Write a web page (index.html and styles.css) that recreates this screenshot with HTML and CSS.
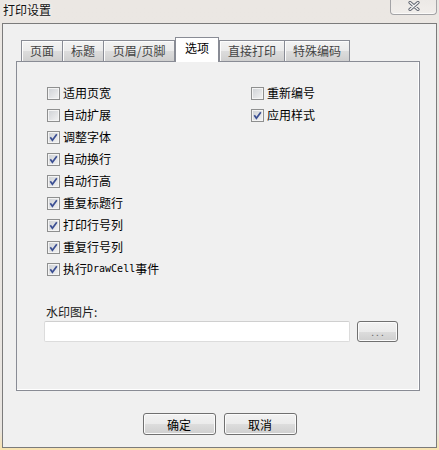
FILE: index.html
```html
<!DOCTYPE html>
<html lang="zh-CN">
<head>
  <meta charset="UTF-8">
  <title>打印设置</title>
  <link rel="stylesheet" href="styles.css">
</head>
<body>

  <div class="window">
    <!-- Title bar -->
    <div class="titlebar">
      <span class="title">打印设置</span>
      <button class="close">
        <svg width="12" height="10" viewBox="0 0 12 10">
          <path d="M2 1.5 L10 8.5 M10 1.5 L2 8.5" stroke="#5f6470" stroke-width="3.2" stroke-linecap="round"/>
          <path d="M2 1.5 L10 8.5 M10 1.5 L2 8.5" stroke="#f4f4f4" stroke-width="1.4" stroke-linecap="round"/>
        </svg>
      </button>
    </div>

    <div class="client">
      <!-- Tabs -->
      <div class="tabs">
        <div class="tab">页面</div>
        <div class="tab">标题</div>
        <div class="tab tab-wide">页眉/页脚</div>
        <div class="tab active">选项</div>
        <div class="tab">直接打印</div>
        <div class="tab">特殊编码</div>
      </div>

      <div class="panel">
        <div class="options">
          <div class="col">
            <label class="check"><span class="box"></span>适用页宽</label>
            <label class="check"><span class="box"></span>自动扩展</label>
            <label class="check"><span class="box"><svg width="11" height="11" viewBox="0 0 11 11"><path d="M2.3 5.2 L4.4 8.2 L8.8 2.2" stroke="#3b4f93" stroke-width="1.7" fill="none"/></svg></span>调整字体</label>
            <label class="check"><span class="box"><svg width="11" height="11" viewBox="0 0 11 11"><path d="M2.3 5.2 L4.4 8.2 L8.8 2.2" stroke="#3b4f93" stroke-width="1.7" fill="none"/></svg></span>自动换行</label>
            <label class="check"><span class="box"><svg width="11" height="11" viewBox="0 0 11 11"><path d="M2.3 5.2 L4.4 8.2 L8.8 2.2" stroke="#3b4f93" stroke-width="1.7" fill="none"/></svg></span>自动行高</label>
            <label class="check"><span class="box"><svg width="11" height="11" viewBox="0 0 11 11"><path d="M2.3 5.2 L4.4 8.2 L8.8 2.2" stroke="#3b4f93" stroke-width="1.7" fill="none"/></svg></span>重复标题行</label>
            <label class="check"><span class="box"><svg width="11" height="11" viewBox="0 0 11 11"><path d="M2.3 5.2 L4.4 8.2 L8.8 2.2" stroke="#3b4f93" stroke-width="1.7" fill="none"/></svg></span>打印行号列</label>
            <label class="check"><span class="box"><svg width="11" height="11" viewBox="0 0 11 11"><path d="M2.3 5.2 L4.4 8.2 L8.8 2.2" stroke="#3b4f93" stroke-width="1.7" fill="none"/></svg></span>重复行号列</label>
            <label class="check"><span class="box"><svg width="11" height="11" viewBox="0 0 11 11"><path d="M2.3 5.2 L4.4 8.2 L8.8 2.2" stroke="#3b4f93" stroke-width="1.7" fill="none"/></svg></span>执行<span class="latin">DrawCell</span>事件</label>
          </div>
          <div class="col">
            <label class="check"><span class="box"></span>重新编号</label>
            <label class="check"><span class="box"><svg width="11" height="11" viewBox="0 0 11 11"><path d="M2.3 5.2 L4.4 8.2 L8.8 2.2" stroke="#3b4f93" stroke-width="1.7" fill="none"/></svg></span>应用样式</label>
          </div>
        </div>

        <!-- Watermark -->
        <div class="watermark">
          <div class="wm-label">水印图片:</div>
          <div class="wm-row">
            <div class="wm-input"></div>
            <button class="btn browse">...</button>
          </div>
        </div>
      </div>

      <!-- Dialog buttons -->
      <div class="actions">
        <button class="btn">确定</button>
        <button class="btn">取消</button>
      </div>
    </div>
  </div>

</body>
</html>
```

FILE: styles.css
```css
/* Basic Reset */
* {
  margin: 0;
  padding: 0;
  box-sizing: border-box;
}

body {
  width: 439px;
  height: 450px;
  overflow: hidden;
  font-family: "Noto Sans CJK SC", sans-serif;
  font-size: 12px;
  line-height: 16px;
  color: #000;
  background: linear-gradient(to bottom, #ebe7e3 0, #e9e5e1 430px, #f6e2b4 447px, #f8e4b0 450px);
}

.window {
  margin: 0 2px;
}

/* Title bar */
.titlebar {
  height: 23px;
  display: flex;
  align-items: flex-start;
  padding-left: 1px;
}

.title {
  padding-top: 2px;
  color: #111;
  text-shadow: 0 0 4px #fff;
}

.close {
  margin-left: auto;
  width: 47px;
  height: 15px;
  border: 1px solid #a3a3a6;
  border-top: none;
  border-radius: 0 0 4px 4px;
  background: linear-gradient(#ece9e6, #f1eeeb);
  box-shadow: inset 0 -1px 0 #fbfaf9;
  display: flex;
  align-items: center;
  justify-content: center;
  padding-bottom: 3px;
}

/* Client area */
.client {
  background-color: #f0f0f0;
  border: 1px solid #7b7b7b;
  padding: 13px 0 12px 13px;
}

/* Tabs */
.tabs {
  display: flex;
  align-items: flex-end;
  height: 24px;
  margin-left: 5px;
}

.tab {
  height: 21px;
  padding: 0 8px;
  border: 1px solid #898c95;
  border-bottom: none;
  border-left: none;
  color: #444;
  line-height: 20px;
  text-align: center;
  background: linear-gradient(#f3f3f3 0%, #ebebeb 50%, #dddddd 50%, #cfcfcf 100%);
  box-shadow: inset 1px 1px 0 #fcfcfc;
}

.tab:first-child {
  border-left: 1px solid #898c95;
}

.tab-wide {
  min-width: 71px;
}

.tab.active + .tab {
  border-left: 1px solid #898c95;
}

.tab.active {
  position: relative;
  z-index: 1;
  height: 25px;
  margin-bottom: -1px;
  padding: 0 9px;
  border-left: 1px solid #898c95;
  color: #000;
  line-height: 20px;
  background: #fff;
  box-shadow: none;
}

.panel {
  width: 404px;
  height: 330px;
  border: 1px solid #898c95;
  box-shadow: inset -1px -1px 0 #fff;
}

/* Options */
.options {
  display: grid;
  grid-template-columns: 204px auto;
  padding: 20px 0 0 30px;
}

.col {
  display: flex;
  flex-direction: column;
}

.check {
  height: 22px;
  display: flex;
  align-items: center;
  white-space: nowrap;
}

.box {
  width: 13px;
  height: 13px;
  margin-right: 3px;
  border: 1px solid #8e8f8f;
  background: linear-gradient(135deg, #cdd0d4, #f3f3f3);
  box-shadow: inset 0 0 0 1px #f4f4f4;
  display: flex;
}

.latin {
  font-family: "DejaVu Sans Mono", monospace;
  font-size: 10px;
}

/* Watermark */
.watermark {
  margin-top: 24px;
  padding-left: 27px;
}

.wm-label {
  padding-left: 2px;
  color: #222;
}

.wm-row {
  display: flex;
  margin-top: 1px;
}

.wm-input {
  width: 306px;
  height: 21px;
  background: #fff;
  border: 1px solid #dcdcdc;
  border-top-color: #cfcfcf;
  border-radius: 2px;
}

/* Buttons */
.btn {
  width: 73px;
  height: 22px;
  font-family: inherit;
  font-size: 12px;
  color: #000;
  border: 1px solid #707070;
  border-radius: 3px;
  background: linear-gradient(#f2f2f2 0%, #ebebeb 50%, #dddddd 50%, #cfcfcf 100%);
  box-shadow: inset 0 0 0 1px #fbfbfb;
}

.browse {
  width: 41px;
  height: 21px;
  margin-left: 7px;
  color: #666;
  font-size: 10px;
  letter-spacing: 2px;
  padding-left: 2px;
}

.actions {
  display: flex;
  justify-content: center;
  gap: 8px;
  margin-top: 22px;
  margin-left: -13px;
}
```
